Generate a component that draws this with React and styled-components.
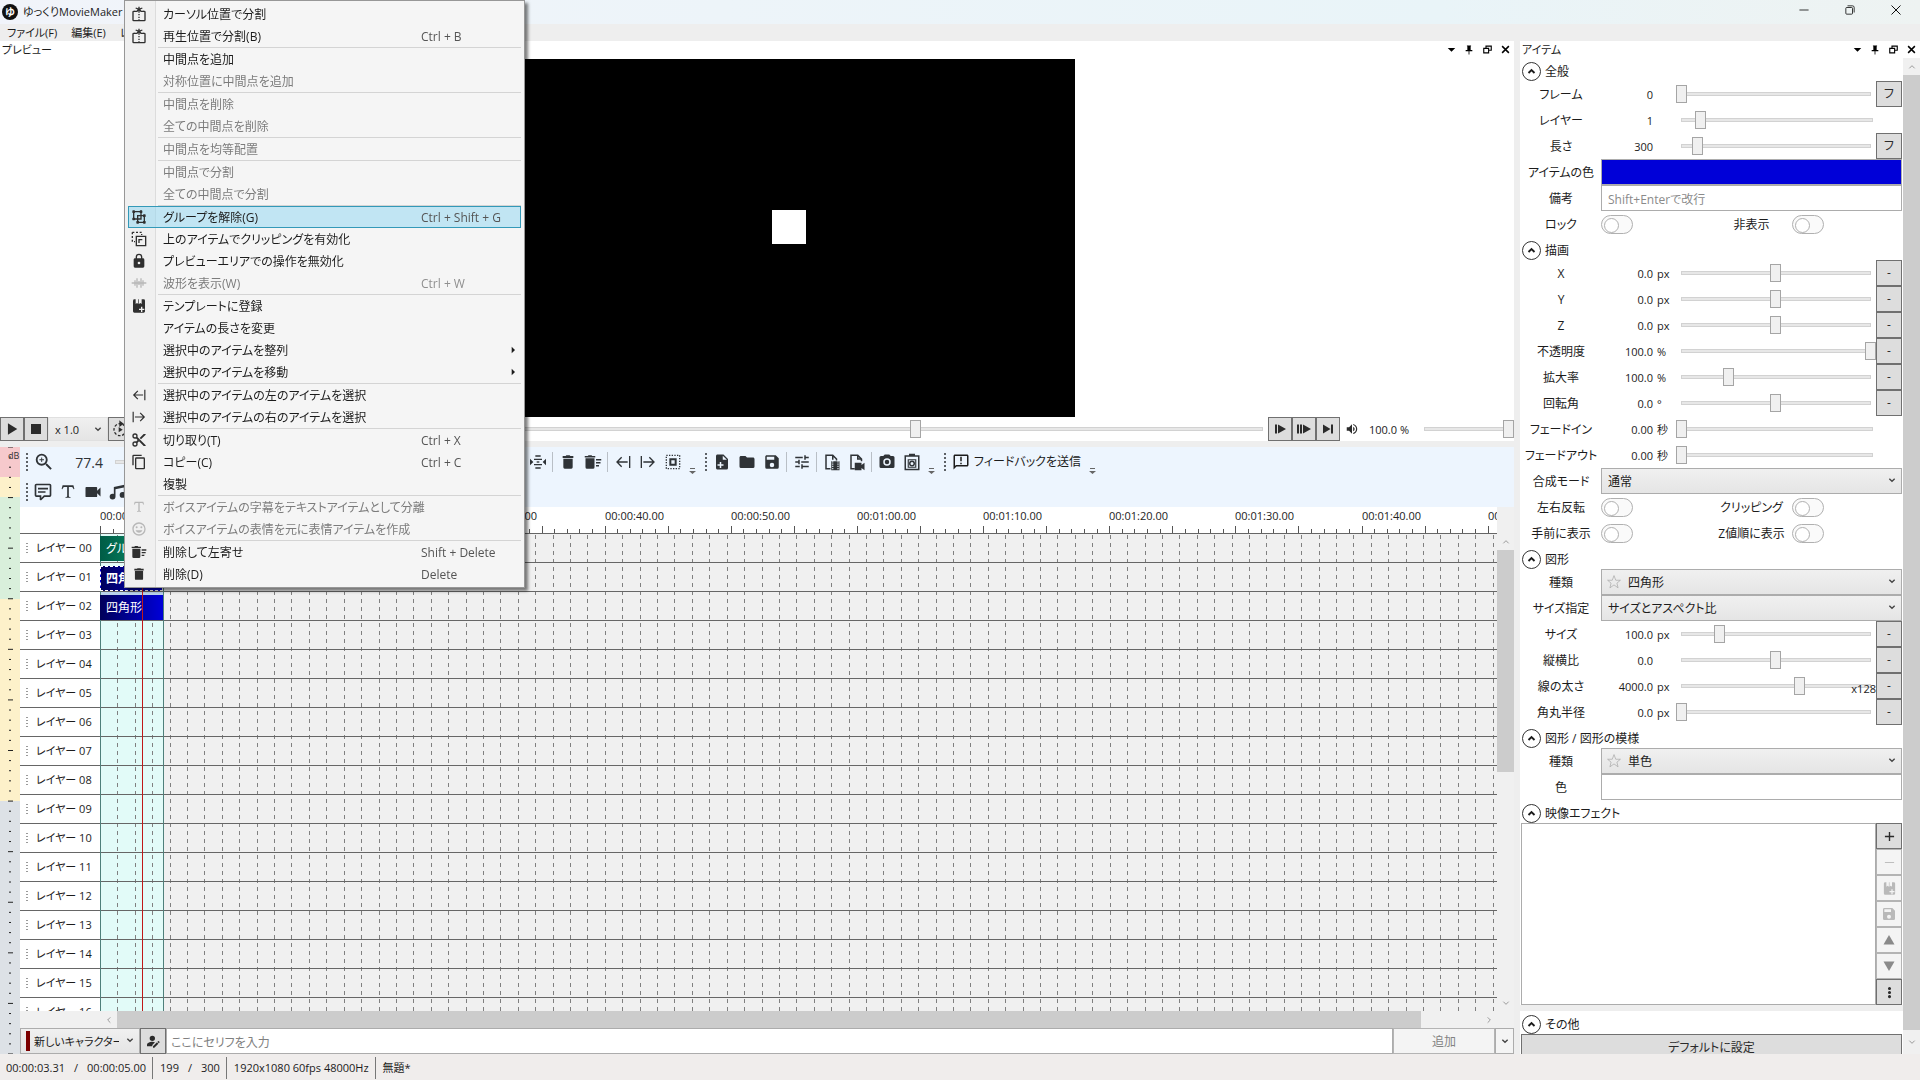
import React from "react";
import styled, { createGlobalStyle, css } from "styled-components";

const Global = createGlobalStyle`
  * { box-sizing: border-box; }
  html, body, #root { height: 100%; margin: 0; }
  body {
    overflow: hidden;
    background: #eeeeee;
    color: #1c1c1c;
    font: 12px/16px "Open Sans", "Noto Sans CJK JP", sans-serif;
    font-feature-settings: "palt";
  }
  button, input, select { font: inherit; font-feature-settings: inherit; color: inherit; margin: 0; }
`;

/* ---------- icons ---------- */

const solid = {
  lock: "M12,17A2,2 0 0,0 14,15C14,13.89 13.1,13 12,13A2,2 0 0,0 10,15A2,2 0 0,0 12,17M18,8A2,2 0 0,1 20,10V20A2,2 0 0,1 18,22H6A2,2 0 0,1 4,20V10C4,8.89 4.9,8 6,8H7V6A5,5 0 0,1 12,1A5,5 0 0,1 17,6V8H18M12,3A3,3 0 0,0 9,6V8H15V6A3,3 0 0,0 12,3Z",
  copy: "M19,21H8V7H19M19,5H8A2,2 0 0,0 6,7V21A2,2 0 0,0 8,23H19A2,2 0 0,0 21,21V7A2,2 0 0,0 19,5M16,1H4A2,2 0 0,0 2,3V17H4V3H16V1Z",
  cut: "M19,3L13,9L15,11L22,4V3M12,12.5A0.5,0.5 0 0,1 11.5,12A0.5,0.5 0 0,1 12,11.5A0.5,0.5 0 0,1 12.5,12A0.5,0.5 0 0,1 12,12.5M6,20A2,2 0 0,1 4,18C4,16.89 4.9,16 6,16A2,2 0 0,1 8,18C8,19.11 7.1,20 6,20M6,8A2,2 0 0,1 4,6C4,4.89 4.9,4 6,4A2,2 0 0,1 8,6C8,7.11 7.1,8 6,8M9.64,7.64C9.87,7.14 10,6.59 10,6A4,4 0 0,0 6,2A4,4 0 0,0 2,6A4,4 0 0,0 6,10C6.59,10 7.14,9.87 7.64,9.64L10,12L7.64,14.36C7.14,14.13 6.59,14 6,14A4,4 0 0,0 2,18A4,4 0 0,0 6,22A4,4 0 0,0 10,18C10,17.41 9.87,16.86 9.64,16.36L12,14L19,21H22V20L9.64,7.64Z",
  trash: "M20,3H15.5L14.5,2H9.5L8.5,3H4V6H20M5,20A2,2 0 0,0 7,22H17A2,2 0 0,0 19,20V7H5V20Z",
  sweep: "M16,16H20V18H16V16M16,8H23V10H16V8M16,12H22V14H16V12M2,19A2,2 0 0,0 4,21H12A2,2 0 0,0 14,19V7H2V19M15,4H11L10,3H6L5,4H1V6H15V4Z",
  save: "M15,9H5V5H15M12,19A3,3 0 0,1 9,16A3,3 0 0,1 12,13A3,3 0 0,1 15,16A3,3 0 0,1 12,19M17,3H5C3.89,3 3,3.9 3,5V19A2,2 0 0,0 5,21H19A2,2 0 0,0 21,19V7L17,3Z",
  folder: "M10,4H4C2.89,4 2,4.89 2,6V18A2,2 0 0,0 4,20H20A2,2 0 0,0 22,18V8C22,6.89 21.1,6 20,6H12L10,4Z",
  camera: "M4,4H7L9,2H15L17,4H20A2,2 0 0,1 22,6V18A2,2 0 0,1 20,20H4A2,2 0 0,1 2,18V6A2,2 0 0,1 4,4M12,7A5,5 0 0,0 7,12A5,5 0 0,0 12,17A5,5 0 0,0 17,12A5,5 0 0,0 12,7M12,9A3,3 0 0,1 15,12A3,3 0 0,1 12,15A3,3 0 0,1 9,12A3,3 0 0,1 12,9Z",
  video: "M17,10.5V7A1,1 0 0,0 16,6H4A1,1 0 0,0 3,7V17A1,1 0 0,0 4,18H16A1,1 0 0,0 17,17V13.5L21,17.5V6.5L17,10.5Z",
  tune: "M3,17V19H9V17H3M3,5V7H13V5H3M13,21V19H21V17H13V15H11V21H13M7,9V11H3V13H7V15H9V9H7M21,13V11H11V13H21M15,9H17V7H21V5H17V3H15V9Z",
  filePlus: "M13,9H18.5L13,3.5V9M6,2H14L20,8V20A2,2 0 0,1 18,22H6C4.89,22 4,21.1 4,20V4C4,2.89 4.89,2 6,2M11,15V12H9V15H6V17H9V20H11V17H14V15H11Z",
  zoomIn: "M15.5,14L20.5,19L19,20.5L14,15.5V14.71L13.73,14.43C12.59,15.41 11.11,16 9.5,16A6.5,6.5 0 0,1 3,9.5A6.5,6.5 0 0,1 9.5,3A6.5,6.5 0 0,1 16,9.5C16,11.11 15.41,12.59 14.43,13.73L14.71,14H15.5M9.5,14C12,14 14,12 14,9.5C14,7 12,5 9.5,5C7,5 5,7 5,9.5C5,12 7,14 9.5,14M12,10H10V12H9V10H7V9H9V7H10V9H12V10Z",
  comment: "M9,22A1,1 0 0,1 8,21V18H4A2,2 0 0,1 2,16V4C2,2.89 2.9,2 4,2H20A2,2 0 0,1 22,4V16A2,2 0 0,1 20,18H13.9L10.2,21.71C10,21.9 9.75,22 9.5,22H9M10,16V19.08L13.08,16H20V4H4V16H10M6,7H18V9H6V7M6,11H15V13H6V11Z",
  serifT: "M18.5,4L19.66,8.35L18.7,8.61C18.25,7.74 17.79,6.87 17.26,6.43C16.73,6 16.11,6 15.5,6H13V16.5C13,17 13,17.5 13.33,17.75C13.67,18 14.33,18 15,18V19H9V18C9.67,18 10.33,18 10.67,17.75C11,17.5 11,17 11,16.5V6H8.5C7.89,6 7.27,6 6.74,6.43C6.21,6.87 5.75,7.74 5.3,8.61L4.34,8.35L5.5,4H18.5Z",
  smile: "M12,17.5C14.33,17.5 16.3,16.04 17.11,14H6.89C7.69,16.04 9.67,17.5 12,17.5M8.5,11A1.5,1.5 0 0,0 10,9.5A1.5,1.5 0 0,0 8.5,8A1.5,1.5 0 0,0 7,9.5A1.5,1.5 0 0,0 8.5,11M15.5,11A1.5,1.5 0 0,0 17,9.5A1.5,1.5 0 0,0 15.5,8A1.5,1.5 0 0,0 14,9.5A1.5,1.5 0 0,0 15.5,11M12,20A8,8 0 0,1 4,12A8,8 0 0,1 12,4A8,8 0 0,1 20,12A8,8 0 0,1 12,20M12,2C6.47,2 2,6.5 2,12A10,10 0 0,0 12,22A10,10 0 0,0 22,12A10,10 0 0,0 12,2Z",
  volume: "M14,3.23V5.29C16.89,6.15 19,8.83 19,12C19,15.17 16.89,17.84 14,18.7V20.77C18,19.86 21,16.28 21,12C21,7.72 18,4.14 14,3.23M16.5,12C16.5,10.23 15.5,8.71 14,7.97V16C15.5,15.29 16.5,13.76 16.5,12M3,9V15H7L12,20V4L7,9H3Z",
  feedback: "M20 2H4C2.9 2 2 2.9 2 4V22L6 18H20C21.1 18 22 17.1 22 16V4C22 2.9 21.1 2 20 2M20 16H5.17L4 17.17V4H20V16M11 5H13V11H11M11 13H13V15H11",
  music: "M21,3V15.5A3.5,3.5 0 0,1 17.5,19A3.5,3.5 0 0,1 14,15.5A3.5,3.5 0 0,1 17.5,12C18.04,12 18.55,12.12 19,12.34V6.47L9,8.6V17.5A3.5,3.5 0 0,1 5.5,21A3.5,3.5 0 0,1 2,17.5A3.5,3.5 0 0,1 5.5,14C6.04,14 6.55,14.12 7,14.34V6L21,3Z",
  personEdit: "M11,12A4,4 0 1,0 7,8A4,4 0 0,0 11,12M11,13C7,13 3,15 3,17.5V20H11V18L15,14C14,13.4 12.5,13 11,13M21.7,13.3L20.7,12.3C20.4,12 20,12 19.7,12.3L18.7,13.3L20.7,15.3L21.7,14.3C22,14 22,13.6 21.7,13.3M12,20V22H14L20,16L18,14L12,20Z",
  play: "M5,2V22L21,12Z",
  stop: "M2,2H22V22H2Z",
  stepPlay: "M2,3H6V21H2ZM8,3V21L24,12Z",
  stepPlay2: "M-2,3H2V21H-2ZM4,3H8V21H4ZM10,3V21L26,12Z",
  toEnd: "M2,3V21L17,12ZM18,3H22V21H18Z",
  tri: "M1,21H23L12,2Z",
  triDown: "M1,3H23L12,22Z",
  dots: "M12,16A2.5,2.5 0 1,1 12,21A2.5,2.5 0 0,1 12,16M12,9.5A2.5,2.5 0 1,1 12,14.5A2.5,2.5 0 0,1 12,9.5M12,3A2.5,2.5 0 1,1 12,8A2.5,2.5 0 0,1 12,3Z",
  caret: "M2,8H22L12,18Z",
  caretRight: "M8,2V22L18,12Z",
  pin: "M7,1H17V3H16V12H20V15H13V23H11V15H4V12H8V3H7Z",
  cassette: "M4,2H7V9L9,7.5L11,9V2H12V9L14,7.5L16,9V2H19A2,2 0 0,1 21,4V20A2,2 0 0,1 19,22H5A2,2 0 0,1 3,20V4ZM15,13V16H12V18H15V21H17V18H20V16H17V13Z",
};

const stroked = {
  split: <><path d="M6 8H4a1 1 0 0 0-1 1v12a1 1 0 0 0 1 1h16a1 1 0 0 0 1-1V9a1 1 0 0 0-1-1h-2" /><path d="M12 1v9M5 8h4l3-4 3 4h4M7 3l5 2 5-2" /><path d="M12 12v9" strokeDasharray="2 2" /></>,
  group: <><path d="M4 4h11v11H4zM10 10h10v10H10z" /><path d="M2 4h4M4 2v4M13 4h4M15 2v4M2 15h4M4 13v4M8 20h4M10 18v4M18 20h4M20 18v4M18 10h4M20 8v4" strokeWidth="3" /></>,
  clip: <><path d="M2 2h14v4M2 2v14h4" strokeDasharray="3 2.5" /><path d="M8 8h14v14H8z" /><path d="M12 18v-5h5" /></>,
  wave: <path d="M1 12h22M6 8v8M9 5v14M12 9v6M15 5v14M18 8v8" />,
  toLeft: <path d="M22 3v18M19 12H3M10 5l-7 7 7 7" />,
  toRight: <path d="M2 3v18M5 12h16M14 5l7 7-7 7" />,
  select: <><path d="M8 8h8v8H8z" strokeWidth="3" /><path d="M2 2h20v20H2z" strokeDasharray="2 2" /></>,
  squeeze: <><path d="M8 3h8M6 8h12M6 16h12M8 21h8" /><path d="M10 12h4" /><path d="M0 7v10l5-5zM24 7v10l-5-5z" fill="currentColor" stroke="none" /></>,
  fileFilm: <><path d="M10 21H4V3h9l5 5v2M13 3v6" /><path d="M11 11h11v12H11z" fill="currentColor" stroke="none" /><path d="M13 11v12M20 11v12" stroke="#edf5fe" strokeWidth="1.5" strokeDasharray="1.5 1.5" /></>,
  fileVideo: <><path d="M9 21H4V3h9l5 5v3M13 3v5h5" /><path d="M9 13h9v3l4-3v10l-4-3v3H9z" fill="currentColor" stroke="none" /></>,
  clipCam: <><path d="M3 4h18v18H3zM9 4V2h6v2" /><circle cx="12" cy="14" r="3" /><path d="M7 9h10v10H7z" strokeWidth="1.5" /></>,
  loop: <><circle cx="12" cy="13" r="9" strokeDasharray="4 2.5" /><path d="M10 9v8l6-4z" fill="currentColor" stroke="none" /><path d="M12 1l4 3-4 3z" fill="currentColor" /></>,
  plus: <path d="M12 2v20M2 12h20" />,
  minus: <path d="M2 12h20" />,
  up: <path d="M4 16l8-8 8 8" />,
  down: <path d="M4 8l8 8 8-8" />,
  left: <path d="M16 4l-8 8 8 8" />,
  right: <path d="M8 4l8 8-8 8" />,
  close: <path d="M3 3l18 18M21 3L3 21" />,
  line: <path d="M1 12h22" />,
  restore: <><path d="M2 8a2 2 0 0 1 2-2h12a2 2 0 0 1 2 2v12a2 2 0 0 1-2 2H4a2 2 0 0 1-2-2z" /><path d="M6 2h12a4 4 0 0 1 4 4v12" /></>,
  dock: <><path d="M2 9h13v12H2z" strokeWidth="3" /><path d="M8 8V3h14v11h-6" strokeWidth="3" /></>,
  star: <path d="M12 1l3 8h8l-6 5 2 8-7-5-7 5 2-8-6-5h8z" />,
};

const Svg = styled.svg`
  display: block;
  flex: none;
  overflow: visible;
`;

function Icon({ name, size = 16, weight = 2 }) {
  if (solid[name]) {
    return (
      <Svg width={size} height={size} viewBox="0 0 24 24" fill="currentColor" fillRule="evenodd" aria-hidden="true">
        <path d={solid[name]} />
      </Svg>
    );
  }
  return (
    <Svg width={size} height={size} viewBox="0 0 24 24" fill="none" stroke="currentColor" strokeWidth={weight} aria-hidden="true">
      {stroked[name]}
    </Svg>
  );
}

/* ---------- shared controls ---------- */

const PlainButton = styled.button`
  display: flex;
  align-items: center;
  justify-content: center;
  padding: 0;
  border: 0;
  background: none;
`;

const BoxButton = styled(PlainButton)`
  width: ${(p) => p.$w || 26}px;
  height: ${(p) => p.$h || 26}px;
  border: 1px solid #707070;
  background: #dddddd;
  color: #2b2b2b;
  &:disabled {
    border-color: #b4b4b4;
    background: #f4f4f4;
    color: ${(p) => (p.$strong ? "#8a8a8a" : "#b9b9b9")};
  }
`;

const Range = styled.input.attrs({ type: "range", min: 0 })`
  appearance: none;
  flex: 1;
  min-width: 0;
  height: 18px;
  background:
    linear-gradient(#e7e7e7, #e7e7e7) center / calc(100% - 12px) 2px no-repeat,
    linear-gradient(#d2d2d2, #d2d2d2) center / calc(100% - 10px) 4px no-repeat;
  &::-webkit-slider-thumb {
    appearance: none;
    width: 11px;
    height: 18px;
    border: 1px solid #a5a5a5;
    background: #f0f0f0;
  }
`;

const SelectWrap = styled.span`
  position: relative;
  display: flex;
  flex: ${(p) => (p.$w ? "none" : 1)};
  width: ${(p) => (p.$w ? `${p.$w}px` : "auto")};
  height: ${(p) => p.$h || 26}px;
`;

const SelectBox = styled.select`
  appearance: none;
  width: 100%;
  padding: 2px 20px 0 ${(p) => p.$indent || 6}px;
  border: 1px solid ${(p) => (p.$flat ? "#e0e0e0" : "#acacac")};
  border-radius: 0;
  background: linear-gradient(#f0f0f0, #e5e5e5);
  font-size: ${(p) => (p.$small ? 11 : 12)}px;
  line-height: 16px;
`;

const SelectArrow = styled.span`
  position: absolute;
  right: 6px;
  top: 8px;
  color: #444444;
  pointer-events: none;
`;

const SelectMark = styled.span`
  position: absolute;
  left: 6px;
  top: 6px;
  color: #999999;
  pointer-events: none;
`;

const CharacterMark = styled.span`
  position: absolute;
  left: 6px;
  top: 3px;
  width: 4px;
  height: 20px;
  background: #7b0000;
`;

function Select({ id, label, value, w, h, mark, indent, flat, small }) {
  return (
    <SelectWrap $w={w} $h={h}>
      <SelectBox id={id} aria-label={label} $indent={indent} $flat={flat} $small={small}>
        <option>{value}</option>
      </SelectBox>
      {mark}
      <SelectArrow><Icon name="down" size={8} weight={4} /></SelectArrow>
    </SelectWrap>
  );
}

/* ---------- window frame ---------- */

const Shell = styled.div`
  display: flex;
  flex-direction: column;
  height: 100vh;
`;

const TitleBar = styled.header`
  display: flex;
  align-items: center;
  gap: 5px;
  height: 24px;
  padding: 0 2px;
  background: linear-gradient(90deg, #f1f4fa, #e9f4f8 75%, #eef3f2);
`;

const Logo = styled.svg`
  display: block;
  flex: none;
`;

const AppName = styled.h1`
  flex: 1;
  margin: 0;
  font-size: 11px;
  line-height: 16px;
  font-weight: 400;
`;

const WindowButtons = styled.div`
  display: flex;
  align-self: flex-start;
  gap: 6px;
  padding-right: 2px;
`;

const WindowButton = styled(PlainButton)`
  width: 40px;
  height: 20px;
  color: #111111;
`;

const MenuBar = styled.nav`
  display: flex;
  gap: 14px;
  height: 17px;
  padding-left: 7px;
  background: #eeeeee;
`;

const MenuBarItem = styled(PlainButton)`
  font-size: 11px;
  line-height: 16px;
`;

const Body = styled.div`
  display: flex;
  flex: 1;
  min-height: 0;
`;

const MainColumn = styled.main`
  display: flex;
  flex-direction: column;
  flex: 1;
  min-width: 0;
  gap: 6px;
`;

/* ---------- panel header ---------- */

const PanelHead = styled.div`
  display: flex;
  align-items: center;
  height: 17px;
  padding-left: 2px;
  background: #ffffff;
`;

const PanelTitle = styled.h2`
  flex: 1;
  margin: 0;
  padding-top: 1px;
  font-size: 11px;
  line-height: 16px;
  font-weight: 400;
`;

const HeadButton = styled(PlainButton)`
  width: 18px;
  height: 17px;
  color: #000000;
`;

function PanelHeader({ title }) {
  return (
    <PanelHead>
      <PanelTitle>{title}</PanelTitle>
      <HeadButton aria-label="メニュー"><Icon name="caret" size={9} /></HeadButton>
      <HeadButton aria-label="固定"><Icon name="pin" size={10} /></HeadButton>
      <HeadButton aria-label="フロート"><Icon name="dock" size={9} /></HeadButton>
      <HeadButton aria-label="閉じる"><Icon name="close" size={9} weight={4} /></HeadButton>
    </PanelHead>
  );
}

/* ---------- preview ---------- */

const PreviewPanel = styled.section`
  display: flex;
  flex-direction: column;
  flex: 400 1 0;
  min-height: 0;
  background: #ffffff;
`;

const Stage = styled.div`
  display: flex;
  justify-content: center;
  flex: 1;
  min-height: 0;
  padding-top: 1px;
`;

const Screen = styled.div`
  position: relative;
  height: 100%;
  aspect-ratio: 16 / 9;
  background: #000000;
`;

const Square = styled.div`
  position: absolute;
  left: 52.4%;
  top: 42.2%;
  width: 5.3%;
  aspect-ratio: 1;
  background: #ffffff;
`;

const Transport = styled.div`
  display: flex;
  align-items: center;
  height: 24px;
`;

const SpeakerIcon = styled.span`
  padding: 0 10px 0 5px;
  color: #2b2b2b;
`;

const Percent = styled.output`
  width: 50px;
  padding-top: 2px;
  font-size: 11px;
`;

const SeekBar = styled(Range)`
  margin: 0;
`;

const VolumeBar = styled(Range)`
  flex: none;
  width: 95px;
`;

/* ---------- timeline ---------- */

const TimelinePanel = styled.section`
  display: flex;
  flex: 607 1 0;
  min-height: 0;
`;

const Meter = styled.svg`
  flex: none;
  width: 20px;
  height: 100%;
  background: linear-gradient(
    #f6c9cc 5%, #fdf1ca 5%, #fdf1ca 8.3%, #d9efdb 8.3%, #d9efdb 25%,
    #fdf1ca 25%, #fdf1ca 58.3%, #dde1e6 58.3%
  );
`;

const TimelineColumn = styled.div`
  display: flex;
  flex-direction: column;
  flex: 1;
  min-width: 0;
`;

const Toolbars = styled.div`
  background: #edf5fe;
  color: #2f3337;
`;

const ToolRow = styled.div`
  display: flex;
  align-items: center;
  height: 30px;
`;

const ToolGroup = styled.div`
  display: flex;
  align-items: center;
  height: 30px;
  width: ${(p) => (p.$w ? `${p.$w}px` : "auto")};
  overflow: hidden;
`;

const Grip = styled.span`
  flex: none;
  width: 2px;
  height: 18px;
  margin: 0 2px 0 6px;
  background: repeating-linear-gradient(#5d6166 0 2px, transparent 2px 4px);
`;

const ToolButton = styled(PlainButton)`
  flex: none;
  width: ${(p) => p.$w || 25}px;
  height: 24px;
  gap: 4px;
  color: inherit;
`;

const TextTool = styled(ToolButton)`
  width: auto;
  padding: 0 4px;
  font-size: 12px;
  color: #1c1c1c;
`;

const ToolRule = styled.span`
  flex: none;
  width: 1px;
  height: 20px;
  margin: 0 2px;
  background: #b9bfc6;
`;

const Overflow = styled(PlainButton)`
  align-self: flex-end;
  width: 14px;
  height: 12px;
  color: #666666;
`;

const ZoomValue = styled.output`
  width: 52px;
  padding: 1px 7px 0 0;
  text-align: right;
  font-size: 14px;
  line-height: 20px;
`;

const TimelineBody = styled.div`
  display: flex;
  flex: 1;
  min-height: 0;
`;

const LayerColumn = styled.div`
  flex: none;
  width: 80px;
  overflow: hidden;
  background: #ffffff;
`;

const RulerCorner = styled.div`
  height: 27px;
  border-bottom: 1px solid #666666;
`;

const LayerRow = styled.div`
  display: flex;
  align-items: center;
  gap: 8px;
  height: 29px;
  padding-left: 6px;
  border-bottom: 1px solid #666666;
  font-size: 11px;
  white-space: nowrap;
`;

const LayerGrip = styled.span`
  width: 2px;
  height: 10px;
  background: repeating-linear-gradient(#9a9a9a 0 1px, transparent 1px 3px);
`;

const TrackColumn = styled.div`
  display: flex;
  flex-direction: column;
  flex: 1;
  min-width: 0;
`;

const Ruler = styled.svg`
  display: block;
  flex: none;
  width: 100%;
  height: 27px;
  background: #ffffff;
  font-size: 11px;
`;

const Tracks = styled.div`
  position: relative;
  flex: 1;
  min-height: 0;
  overflow: hidden;
  background: #f0f0f0;
`;

const TrackGrid = styled.svg`
  display: block;
  width: 100%;
  height: 100%;
`;

const ClipItem = styled.div`
  position: absolute;
  left: 0;
  height: 25px;
  padding-left: 6px;
  overflow: hidden;
  color: #ffffff;
  line-height: 26px;
  white-space: nowrap;
  background: ${(p) => (p.$group ? "linear-gradient(90deg, #005c46, #0a9a70)" : "linear-gradient(90deg, #00005a, #0000d8)")};
  ${(p) => p.$picked && css`
    border: 1px dashed #ffffff;
    padding-left: 5px;
    font-weight: 700;
    line-height: 24px;
  `}
`;

const Playhead = styled.div`
  position: absolute;
  top: 0;
  bottom: 0;
  width: 1px;
  background: #c01818;
`;

const VBar = styled.div`
  display: flex;
  flex-direction: column;
  align-items: center;
  flex: none;
  width: 17px;
  padding-top: ${(p) => p.$top || 0}px;
  background: #f0f0f0;
  color: #9a9a9a;
`;

const BarButton = styled(PlainButton)`
  flex: none;
  width: 17px;
  height: ${(p) => p.$h || 17}px;
  color: inherit;
`;

const VThumb = styled.div`
  width: 17px;
  flex: ${(p) => p.$grow} 1 0;
  background: #cccccc;
`;

const BarSpace = styled.div`
  flex: ${(p) => p.$grow} 1 0;
`;

const HBar = styled.div`
  display: flex;
  align-items: center;
  height: 17px;
  padding: 0 17px 0 80px;
  background: #f0f0f0;
  color: #9a9a9a;
`;

const HThumb = styled.div`
  height: 17px;
  flex: ${(p) => p.$grow} 1 0;
  background: #cccccc;
`;

const SerifRow = styled.form`
  display: flex;
  height: 26px;
`;

const SerifInput = styled.input`
  flex: 1;
  min-width: 0;
  height: 26px;
  padding: 2px 4px 0;
  border: 1px solid #acacac;
  background: #ffffff;
  &::placeholder { color: #808080; }
`;

const AddButton = styled(BoxButton)`
  padding-top: 2px;
  &:disabled { color: #838383; }
`;

const SmallDrop = styled(BoxButton)`
  border-color: #acacac;
  background: #f4f4f4;
  color: #444444;
`;

const PX_PER_SECOND = 12.615;
const GRID_STEP = 17.409;
const CLIP_WIDTH = Math.round(5 * PX_PER_SECOND);
const range = (n) => Array.from({ length: n }, (_, i) => i);
const pad = (n) => String(n).padStart(2, "0");

function LevelMeter() {
  return (
    <Meter role="img" aria-label="音量メーター">
      {range(61).map((i) => {
        const major = i % 5 === 0;
        return (
          <line key={i} x1={major ? 8 : 9} x2={major ? 13 : 11} y1={`${(i / 60) * 100}%`} y2={`${(i / 60) * 100}%`} stroke="#222222" strokeWidth="1" />
        );
      })}
      <text x="8" y="12" fontSize="9" fill="#333333">dB</text>
    </Meter>
  );
}

function TimeRuler() {
  return (
    <Ruler>
      {range(180).map((s) => {
        const x = Math.round(s * PX_PER_SECOND) + 0.5;
        return <line key={s} x1={x} x2={x} y1={s % 5 === 0 ? 19 : 22} y2={26} stroke="#555555" />;
      })}
      {range(12).map((i) => (
        <text key={i} x={Math.round(i * 10 * PX_PER_SECOND)} y="13" fill="#222222">
          {`00:${pad(Math.floor(i / 6))}:${pad((i % 6) * 10)}.00`}
        </text>
      ))}
      <line x1="0" x2="100%" y1="26.5" y2="26.5" stroke="#666666" />
    </Ruler>
  );
}

function TrackArea() {
  return (
    <Tracks>
      <TrackGrid>
        <rect x="0" y="0" width={CLIP_WIDTH} height="100%" fill="#e2fbf8" />
        {range(130).map((i) => {
          const x = Math.round((i + 1) * GRID_STEP) + 0.5;
          return <line key={i} x1={x} x2={x} y1="1" y2="100%" stroke="#808080" strokeDasharray="4 4" />;
        })}
        {range(40).map((i) => (
          <line key={i} x1="0" x2="100%" y1={i * 29 + 28.5} y2={i * 29 + 28.5} stroke="#666666" />
        ))}
        <line x1="0.5" x2="0.5" y1="0" y2="100%" stroke="#4f7f7a" />
        <line x1={CLIP_WIDTH + 0.5} x2={CLIP_WIDTH + 0.5} y1="0" y2="100%" stroke="#4f7f7a" />
        <rect x="1" y="58" width={CLIP_WIDTH - 1} height="3" fill="#b9d2ec" />
      </TrackGrid>
      <ClipItem $group style={{ top: 2, width: CLIP_WIDTH }}>グループ</ClipItem>
      <ClipItem $picked style={{ top: 32, width: CLIP_WIDTH }}>四角形</ClipItem>
      <ClipItem style={{ top: 61, width: CLIP_WIDTH }}>四角形</ClipItem>
      <Playhead style={{ left: Math.round((199 / 60) * PX_PER_SECOND) }} />
    </Tracks>
  );
}

/* ---------- property panel ---------- */

const Splitter = styled.div`
  flex: none;
  width: 6px;
  background: #eeeeee;
`;

const SidePanel = styled.aside`
  display: flex;
  flex-direction: column;
  flex: none;
  width: 400px;
  background: #ffffff;
`;

const SideBody = styled.div`
  display: flex;
  flex: 1;
  min-height: 0;
`;

const Props = styled.div`
  display: flex;
  flex-direction: column;
  flex: 1;
  min-width: 0;
  overflow: hidden;
`;

const Section = styled.section`
  flex: none;
  padding: 0 1px;
`;

const SectionHead = styled.h3`
  display: flex;
  align-items: center;
  gap: 4px;
  height: 23px;
  margin: 0;
  padding: 3px 0 0 1px;
  font-size: 12px;
  line-height: 16px;
  font-weight: 400;
`;

const SectionText = styled.span`
  padding-top: 2px;
`;

const FoldButton = styled(PlainButton)`
  width: 19px;
  height: 19px;
  border: 1px solid #333333;
  border-radius: 50%;
  background: #ffffff;
`;

const PropRow = styled.div`
  display: flex;
  align-items: center;
  position: relative;
  height: 26px;
`;

const PropLabel = styled.label`
  flex: none;
  width: 80px;
  padding-top: 2px;
  text-align: center;
  white-space: nowrap;
`;

const PropValue = styled.output`
  flex: none;
  width: 52px;
  padding-top: 2px;
  text-align: right;
  font-size: 11px;
`;

const PropUnit = styled.span`
  flex: none;
  width: 23px;
  padding: 2px 0 0 4px;
  font-size: 11px;
`;

const PropRange = styled(Range)`
  margin-right: ${(p) => (p.$open ? 24 : 0)}px;
`;

const Multiplier = styled.span`
  position: absolute;
  right: 26px;
  bottom: 2px;
  font-size: 11px;
`;

const ColorField = styled.input.attrs({ type: "color" })`
  appearance: none;
  flex: 1;
  height: 26px;
  padding: 0;
  border: 1px solid #acacac;
  background: none;
  &::-webkit-color-swatch-wrapper { padding: 0; }
  &::-webkit-color-swatch { border: 0; border-radius: 0; }
`;

const NoteField = styled.input`
  flex: 1;
  min-width: 0;
  height: 26px;
  padding: 2px 6px 0;
  border: 1px solid #acacac;
  &::placeholder { color: #8a8a8a; }
`;

const Half = styled.div`
  display: flex;
  align-items: center;
  flex: 1;
`;

const Toggle = styled.input.attrs({ type: "checkbox" })`
  appearance: none;
  width: 32px;
  height: 19px;
  margin: 0;
  padding: 2px;
  border: 1px solid #b0b0b0;
  border-radius: 10px;
  background: #fafafa;
  &::before {
    content: "";
    display: block;
    width: 13px;
    height: 13px;
    border: 1px solid #b0b0b0;
    border-radius: 50%;
    background: #ffffff;
  }
`;

const EffectArea = styled.div`
  display: flex;
`;

const EffectList = styled.ul`
  flex: 1;
  margin: 0;
  border: 1px solid #acacac;
  background: #ffffff;
`;

const EffectButtons = styled.div`
  display: flex;
  flex-direction: column;
`;

const SectionDivider = styled.div`
  flex: none;
  height: 6px;
  background: #eeeeee;
`;

const DefaultButton = styled(BoxButton)`
  width: 100%;
  padding-top: 2px;
`;

function SectionTitle({ children }) {
  return (
    <SectionHead>
      <FoldButton aria-label={`${children}を折りたたむ`}><Icon name="up" size={9} weight={5} /></FoldButton>
      <SectionText>{children}</SectionText>
    </SectionHead>
  );
}

function SliderRow({ id, label, value, unit, at, max = 189, button, extra }) {
  return (
    <PropRow>
      <PropLabel htmlFor={id}>{label}</PropLabel>
      <PropValue>{value}</PropValue>
      <PropUnit>{unit}</PropUnit>
      <PropRange id={id} max={max} defaultValue={at} $open={!button} />
      {extra && <Multiplier>{extra}</Multiplier>}
      {button && <BoxButton>{button}</BoxButton>}
    </PropRow>
  );
}

function SelectRow({ id, label, value, star }) {
  return (
    <PropRow>
      <PropLabel htmlFor={id}>{label}</PropLabel>
      <Select id={id} value={value} indent={star ? 26 : 6} mark={star && <SelectMark><Icon name="star" size={14} weight={1} /></SelectMark>} />
    </PropRow>
  );
}

function ToggleRow({ items }) {
  return (
    <PropRow>
      {items.map(([id, label]) => (
        <Half key={id}>
          <PropLabel htmlFor={id}>{label}</PropLabel>
          <Toggle id={id} />
        </Half>
      ))}
    </PropRow>
  );
}

/* ---------- status bar ---------- */

const StatusBar = styled.footer`
  display: flex;
  align-items: center;
  height: 26px;
  padding: 1px 0 0 6px;
  background: #f0edec;
  font-size: 11px;
`;

const StatusCell = styled.span`
  display: flex;
  gap: 9px;
  padding-right: 6px;
  margin-right: 7px;
  line-height: 22px;
  border-right: ${(p) => (p.$last ? "0" : "1px solid #777777")};
`;

/* ---------- context menu ---------- */

const ContextMenu = styled.ul`
  position: fixed;
  z-index: 10;
  left: 124px;
  top: 0;
  width: 401px;
  margin: 0;
  padding: 2px 3px;
  list-style: none;
  border: 1px solid #979797;
  background: linear-gradient(90deg, #f0f0f0 30px, #dcdcdc 30px, #dcdcdc 31px, #f5f5f5 31px);
  box-shadow: 3px 3px 3px rgba(0, 0, 0, 0.5);
`;

const MenuRule = styled.li`
  height: 1px;
  margin-left: 30px;
  background: #d4d4d4;
`;

const MenuButton = styled.button`
  display: flex;
  align-items: center;
  width: 100%;
  height: 22px;
  padding: 0;
  border: 1px solid ${(p) => (p.$active ? "#3399b8" : "transparent")};
  background: ${(p) => (p.$active ? "rgba(150, 215, 240, 0.55)" : "none")};
  color: #1c1c1c;
  text-align: left;
  &:disabled { color: #7c7c7c; }
`;

const MenuIcon = styled.span`
  display: flex;
  justify-content: center;
  flex: none;
  width: 20px;
  margin-right: 14px;
  color: ${(p) => (p.$off ? "#b8b8b8" : "#2f2f2f")};
`;

const MenuText = styled.span`
  flex: none;
  width: 258px;
  padding-top: 2px;
  white-space: nowrap;
`;

const MenuKeys = styled.span`
  flex: 1;
  padding-top: 2px;
  color: ${(p) => (p.$off ? "#8f8f8f" : "#555555")};
`;

const MenuArrow = styled.span`
  padding-right: 3px;
`;

const menuGroups = [
  [["カーソル位置で分割", "split"], ["再生位置で分割(B)", "split", "Ctrl + B"]],
  [["中間点を追加"], ["対称位置に中間点を追加", null, null, "off"]],
  [["中間点を削除", null, null, "off"], ["全ての中間点を削除", null, null, "off"]],
  [["中間点を均等配置", null, null, "off"]],
  [["中間点で分割", null, null, "off"], ["全ての中間点で分割", null, null, "off"]],
  [
    ["グループを解除(G)", "group", "Ctrl + Shift + G", "active"],
    ["上のアイテムでクリッピングを有効化", "clip"],
    ["プレビューエリアでの操作を無効化", "lock"],
    ["波形を表示(W)", "wave", "Ctrl + W", "off"],
  ],
  [
    ["テンプレートに登録", "cassette"],
    ["アイテムの長さを変更"],
    ["選択中のアイテムを整列", null, null, "sub"],
    ["選択中のアイテムを移動", null, null, "sub"],
  ],
  [["選択中のアイテムの左のアイテムを選択", "toLeft"], ["選択中のアイテムの右のアイテムを選択", "toRight"]],
  [["切り取り(T)", "cut", "Ctrl + X"], ["コピー(C)", "copy", "Ctrl + C"], ["複製"]],
  [
    ["ボイスアイテムの字幕をテキストアイテムとして分離", "serifT", null, "off"],
    ["ボイスアイテムの表情を元に表情アイテムを作成", "smile", null, "off"],
  ],
  [["削除して左寄せ", "sweep", "Shift + Delete"], ["削除(D)", "trash", "Delete"]],
];

const narrowIcons = ["toLeft", "toRight", "trash"];

function ItemMenu() {
  return (
    <ContextMenu role="menu">
      {menuGroups.map((group, g) => (
        <React.Fragment key={g}>
          {g > 0 && <MenuRule role="separator" />}
          {group.map(([text, icon, keys, state]) => (
            <li key={text} role="none">
              <MenuButton role="menuitem" disabled={state === "off"} $active={state === "active"}>
                <MenuIcon $off={state === "off"}>
                  {icon && <Icon name={icon} size={narrowIcons.includes(icon) ? 14 : 16} />}
                </MenuIcon>
                <MenuText>{text}</MenuText>
                <MenuKeys $off={state === "off"}>{keys}</MenuKeys>
                {state === "sub" && <MenuArrow><Icon name="caretRight" size={8} /></MenuArrow>}
              </MenuButton>
            </li>
          ))}
        </React.Fragment>
      ))}
    </ContextMenu>
  );
}

/* ---------- page ---------- */

function Tool({ name, label, size = 16 }) {
  return <ToolButton aria-label={label}><Icon name={name} size={size} /></ToolButton>;
}

function More() {
  return (
    <Overflow aria-label="その他のツール">
      <Svg width="7" height="6" viewBox="0 0 7 6" fill="currentColor"><path d="M1 0H6V1H1ZM0 3H7L3.5 6Z" /></Svg>
    </Overflow>
  );
}

export default function App() {
  return (
    <Shell>
      <Global />
      <TitleBar>
        <Logo width="16" height="16" viewBox="0 0 16 16" aria-hidden="true">
          <circle cx="8" cy="8" r="8" fill="#111111" />
          <text x="8" y="12" fontSize="10" fontWeight="700" textAnchor="middle" fill="#ffffff">ゆ</text>
        </Logo>
        <AppName>ゆっくりMovieMaker</AppName>
        <WindowButtons>
          <WindowButton aria-label="最小化"><Icon name="line" size={10} /></WindowButton>
          <WindowButton aria-label="元に戻す"><Icon name="restore" size={10} /></WindowButton>
          <WindowButton aria-label="閉じる"><Icon name="close" size={12} /></WindowButton>
        </WindowButtons>
      </TitleBar>
      <MenuBar>
        <MenuBarItem>ファイル(F)</MenuBarItem>
        <MenuBarItem>編集(E)</MenuBarItem>
        <MenuBarItem>レイアウト(L)</MenuBarItem>
      </MenuBar>

      <Body>
        <MainColumn>
          <PreviewPanel>
            <PanelHeader title="プレビュー" />
            <Stage><Screen><Square /></Screen></Stage>
            <Transport>
              <BoxButton $w={24} $h={24} aria-label="再生"><Icon name="play" size={14} /></BoxButton>
              <BoxButton $w={24} $h={24} aria-label="停止"><Icon name="stop" size={12} /></BoxButton>
              <Select label="再生速度" value="x 1.0" w={60} h={24} flat small />
              <BoxButton $w={24} $h={24} aria-label="ループ"><Icon name="loop" size={16} /></BoxButton>
              <SeekBar aria-label="再生位置" max={1000} defaultValue={692} />
              <BoxButton $w={24} $h={24} aria-label="コマ送り"><Icon name="stepPlay" size={12} /></BoxButton>
              <BoxButton $w={24} $h={24} aria-label="早送り"><Icon name="stepPlay2" size={12} /></BoxButton>
              <BoxButton $w={24} $h={24} aria-label="末尾へ"><Icon name="toEnd" size={12} /></BoxButton>
              <SpeakerIcon><Icon name="volume" size={14} /></SpeakerIcon>
              <Percent>100.0 %</Percent>
              <VolumeBar aria-label="音量" max={100} defaultValue={100} />
            </Transport>
          </PreviewPanel>

          <TimelinePanel>
            <LevelMeter />
            <TimelineColumn>
              <Toolbars>
                <ToolRow>
                  <ToolGroup $w={505}>
                    <Grip />
                    <ToolButton $w={28} aria-label="拡大"><Icon name="zoomIn" size={22} /></ToolButton>
                    <ZoomValue>77.4</ZoomValue>
                    <Range aria-label="拡大率" max={100} defaultValue={50} />
                  </ToolGroup>
                  <ToolGroup>
                    <Tool name="squeeze" label="間隔を詰める" /><ToolRule />
                    <Tool name="trash" label="削除" /><Tool name="sweep" label="削除して左寄せ" size={18} /><ToolRule />
                    <Tool name="toLeft" label="左のアイテムを選択" /><Tool name="toRight" label="右のアイテムを選択" />
                    <Tool name="select" label="範囲選択" /><More />
                  </ToolGroup>
                  <ToolGroup>
                    <Grip />
                    <Tool name="filePlus" label="新規作成" size={18} /><Tool name="folder" label="開く" size={18} /><Tool name="save" label="保存" size={18} /><ToolRule />
                    <Tool name="tune" label="設定" size={18} /><ToolRule />
                    <Tool name="fileFilm" label="動画出力" size={18} /><Tool name="fileVideo" label="動画ファイル" size={18} /><ToolRule />
                    <Tool name="camera" label="スクリーンショット" size={18} /><Tool name="clipCam" label="クリップボードにコピー" size={18} /><More />
                  </ToolGroup>
                  <ToolGroup>
                    <Grip />
                    <TextTool><Icon name="feedback" size={18} />フィードバックを送信</TextTool>
                    <More />
                  </ToolGroup>
                </ToolRow>
                <ToolRow>
                  <Grip />
                  <Tool name="comment" label="ボイス" size={20} />
                  <Tool name="serifT" label="テキスト" size={20} />
                  <Tool name="video" label="動画" size={20} />
                  <Tool name="music" label="音声" size={20} />
                </ToolRow>
              </Toolbars>

              <TimelineBody>
                <LayerColumn>
                  <RulerCorner />
                  {range(17).map((i) => (
                    <LayerRow key={i}><LayerGrip />{`レイヤー ${pad(i)}`}</LayerRow>
                  ))}
                </LayerColumn>
                <TrackColumn>
                  <TimeRuler />
                  <TrackArea />
                </TrackColumn>
                <VBar $top={26}>
                  <BarButton aria-label="上へ"><Icon name="up" size={8} weight={3} /></BarButton>
                  <VThumb $grow={222} />
                  <BarSpace $grow={222} />
                  <BarButton aria-label="下へ"><Icon name="down" size={8} weight={3} /></BarButton>
                </VBar>
              </TimelineBody>
              <HBar>
                <BarButton aria-label="左へ"><Icon name="left" size={8} weight={3} /></BarButton>
                <HThumb $grow={1304} />
                <BarSpace $grow={59} />
                <BarButton aria-label="右へ"><Icon name="right" size={8} weight={3} /></BarButton>
              </HBar>
              <SerifRow onSubmit={(e) => e.preventDefault()}>
                <Select label="キャラクター" value="新しいキャラクター" w={120} indent={13} small mark={<CharacterMark />} />
                <BoxButton type="button" aria-label="キャラクター編集"><Icon name="personEdit" size={16} /></BoxButton>
                <SerifInput aria-label="セリフ" placeholder="ここにセリフを入力" />
                <AddButton $w={102} disabled>追加</AddButton>
                <SmallDrop type="button" $w={19} aria-label="追加オプション"><Icon name="down" size={8} weight={4} /></SmallDrop>
              </SerifRow>
            </TimelineColumn>
          </TimelinePanel>
        </MainColumn>

        <Splitter />

        <SidePanel>
          <PanelHeader title="アイテム" />
          <SideBody>
            <Props>
              <Section>
                <SectionTitle>全般</SectionTitle>
                <SliderRow id="frame" label="フレーム" value="0" at={0} button="フ" />
                <SliderRow id="layer" label="レイヤー" value="1" at={19} max={191} />
                <SliderRow id="length" label="長さ" value="300" at={16} button="フ" />
                <PropRow>
                  <PropLabel htmlFor="itemColor">アイテムの色</PropLabel>
                  <ColorField id="itemColor" defaultValue="#0000d8" />
                </PropRow>
                <PropRow>
                  <PropLabel htmlFor="note">備考</PropLabel>
                  <NoteField id="note" placeholder="Shift+Enterで改行" />
                </PropRow>
                <ToggleRow items={[["lock", "ロック"], ["hide", "非表示"]]} />
              </Section>
              <Section>
                <SectionTitle>描画</SectionTitle>
                <SliderRow id="x" label="X" value="0.0" unit="px" at={94} button="-" />
                <SliderRow id="y" label="Y" value="0.0" unit="px" at={94} button="-" />
                <SliderRow id="z" label="Z" value="0.0" unit="px" at={94} button="-" />
                <SliderRow id="opacity" label="不透明度" value="100.0" unit="%" at={189} button="-" />
                <SliderRow id="scale" label="拡大率" value="100.0" unit="%" at={47} button="-" />
                <SliderRow id="angle" label="回転角" value="0.0" unit="°" at={94} button="-" />
                <SliderRow id="fadeIn" label="フェードイン" value="0.00" unit="秒" at={0} />
                <SliderRow id="fadeOut" label="フェードアウト" value="0.00" unit="秒" at={0} />
                <SelectRow id="blend" label="合成モード" value="通常" />
                <ToggleRow items={[["flip", "左右反転"], ["clipping", "クリッピング"]]} />
                <ToggleRow items={[["front", "手前に表示"], ["zorder", "Z値順に表示"]]} />
              </Section>
              <Section>
                <SectionTitle>図形</SectionTitle>
                <SelectRow id="shape" label="種類" value="四角形" star />
                <SelectRow id="sizeMode" label="サイズ指定" value="サイズとアスペクト比" />
                <SliderRow id="size" label="サイズ" value="100.0" unit="px" at={38} button="-" />
                <SliderRow id="aspect" label="縦横比" value="0.0" at={94} button="-" />
                <SliderRow id="stroke" label="線の太さ" value="4000.0" unit="px" at={118} button="-" extra="x128" />
                <SliderRow id="radius" label="角丸半径" value="0.0" unit="px" at={0} button="-" />
              </Section>
              <Section>
                <SectionTitle>図形 / 図形の模様</SectionTitle>
                <SelectRow id="pattern" label="種類" value="単色" star />
                <PropRow>
                  <PropLabel htmlFor="patternColor">色</PropLabel>
                  <ColorField id="patternColor" defaultValue="#ffffff" />
                </PropRow>
              </Section>
              <Section>
                <SectionTitle>映像エフェクト</SectionTitle>
                <EffectArea>
                  <EffectList />
                  <EffectButtons>
                    <BoxButton aria-label="追加"><Icon name="plus" size={11} weight={3} /></BoxButton>
                    <BoxButton aria-label="削除" disabled><Icon name="minus" size={11} /></BoxButton>
                    <BoxButton aria-label="テンプレート登録" disabled><Icon name="cassette" size={15} /></BoxButton>
                    <BoxButton aria-label="保存" disabled><Icon name="save" size={16} /></BoxButton>
                    <BoxButton aria-label="上へ" disabled $strong><Icon name="tri" size={12} /></BoxButton>
                    <BoxButton aria-label="下へ" disabled $strong><Icon name="triDown" size={12} /></BoxButton>
                    <BoxButton aria-label="メニュー"><Icon name="dots" size={15} /></BoxButton>
                  </EffectButtons>
                </EffectArea>
              </Section>
              <SectionDivider />
              <Section>
                <SectionTitle>その他</SectionTitle>
                <DefaultButton>デフォルトに設定</DefaultButton>
              </Section>
            </Props>
            <VBar>
              <BarButton aria-label="上へ"><Icon name="up" size={8} weight={3} /></BarButton>
              <VThumb $grow={1} />
              <BarButton $h={24} aria-label="下へ"><Icon name="down" size={8} weight={3} /></BarButton>
            </VBar>
          </SideBody>
        </SidePanel>
      </Body>

      <StatusBar>
        <StatusCell><span>00:00:03.31</span><span>/</span><span>00:00:05.00</span></StatusCell>
        <StatusCell><span>199</span><span>/</span><span>300</span></StatusCell>
        <StatusCell>1920x1080 60fps 48000Hz</StatusCell>
        <StatusCell $last>無題*</StatusCell>
      </StatusBar>

      <ItemMenu />
    </Shell>
  );
}
